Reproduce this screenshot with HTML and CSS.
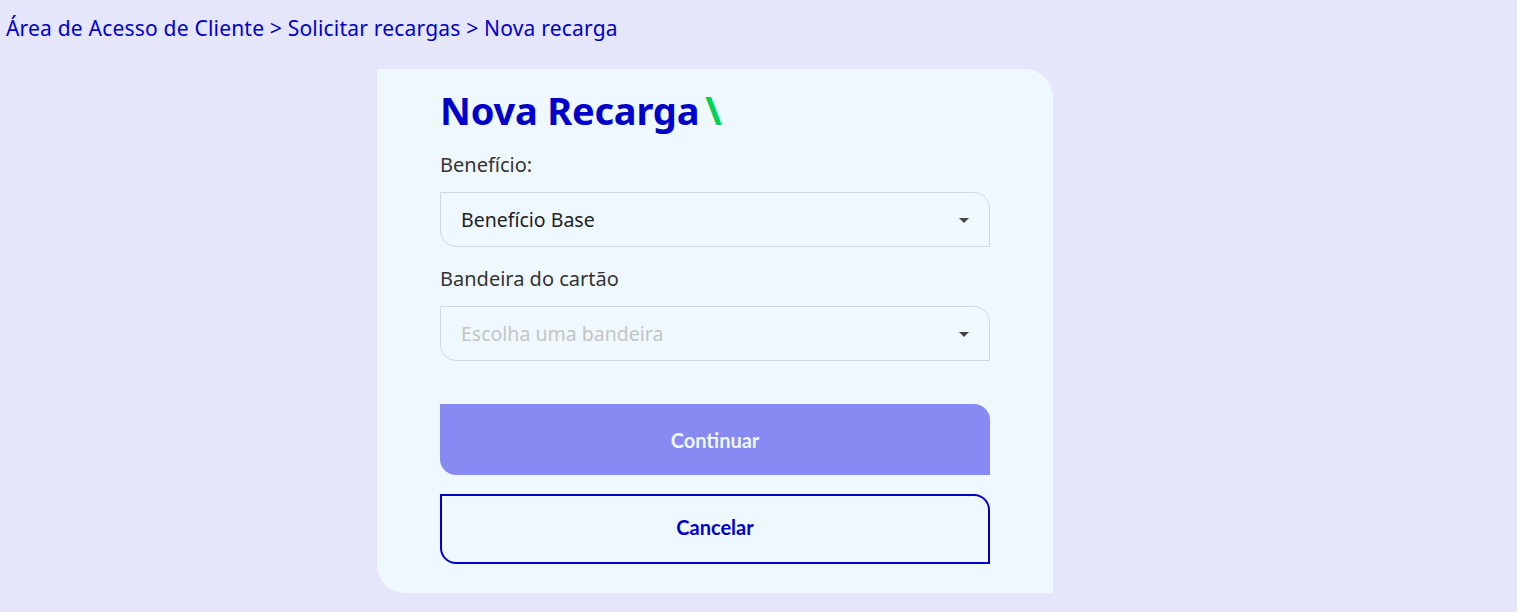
FILE: index.html
```html
<!DOCTYPE html>
<html lang="pt-BR">
<head>
<meta charset="utf-8">
<title>Nova recarga</title>
<link rel="stylesheet" href="styles.css">
</head>
<body>
<nav class="breadcrumb">Área de Acesso de Cliente &gt; Solicitar recargas &gt; Nova recarga</nav>
<main class="card">
  <h1 class="title">Nova Recarga<span class="slash">\</span></h1>
  <form class="form">
    <label class="label">Benefício:</label>
    <div class="select">
      <span class="value">Benefício Base</span>
      <span class="caret"></span>
    </div>
    <label class="label label-second">Bandeira do cartão</label>
    <div class="select">
      <span class="value placeholder">Escolha uma bandeira</span>
      <span class="caret"></span>
    </div>
    <button type="button" class="btn btn-primary">Continuar</button>
    <button type="button" class="btn btn-outline">Cancelar</button>
  </form>
</main>
</body>
</html>
```

FILE: styles.css
```css
* { box-sizing: border-box; }
html, body { margin: 0; padding: 0; }
body {
  background: #e6e6fa;
  font-family: "Noto Sans", "Open Sans", sans-serif;
  min-height: 612px;
}
.breadcrumb {
  padding: 16px 0 0 6px;
  font-size: 21px;
  line-height: 24px;
  letter-spacing: 0.2px;
  color: #0000cd;
}
.card {
  margin: 29px 0 0 377px;
  width: 676px;
  background: #f0f8ff;
  border-radius: 0 28px 0 28px;
  padding: 17px 63px 29px 63px;
}
.title {
  margin: 0;
  font-size: 38px;
  line-height: 48px;
  font-weight: 700;
  color: #0000cd;
  letter-spacing: -0.2px;
}
.slash {
  color: #00d455;
  margin-left: 6px;
  font-size: 40px;
}
.form {
  display: flex;
  flex-direction: column;
}
.label {
  display: block;
  margin-top: 19px;
  font-size: 20px;
  line-height: 24px;
  color: #333333;
}
.label-second { margin-top: 20px; }
.select {
  margin-top: 15px;
  height: 55px;
  flex: 0 0 55px;
  border: 1px solid #d3d8df;
  border-radius: 0 16px 0 16px;
  display: flex;
  align-items: center;
  justify-content: space-between;
  padding: 0 20px 0 20px;
}
.value {
  font-size: 19.5px;
  color: #222222;
}
.placeholder { color: #c4c4c4; }
.caret {
  width: 0;
  height: 0;
  border-left: 5px solid transparent;
  border-right: 5px solid transparent;
  border-top: 5px solid #444444;
  margin-top: 2px;
}
.btn {
  font-family: Lato, "Noto Sans", sans-serif;
  font-weight: 700;
  font-size: 20px;
  width: 100%;
  height: 71px;
  flex: 0 0 71px;
  border-radius: 0 16px 0 16px;
  cursor: pointer;
}
.btn-primary {
  margin-top: 43px;
  background: #878af2;
  color: #f0f8ff;
  border: none;
}
.btn-outline {
  margin-top: 19px;
  height: 70px;
  flex: 0 0 70px;
  padding-bottom: 5px;
  background: transparent;
  color: #0000cd;
  border: 2px solid #0000cd;
}
```
